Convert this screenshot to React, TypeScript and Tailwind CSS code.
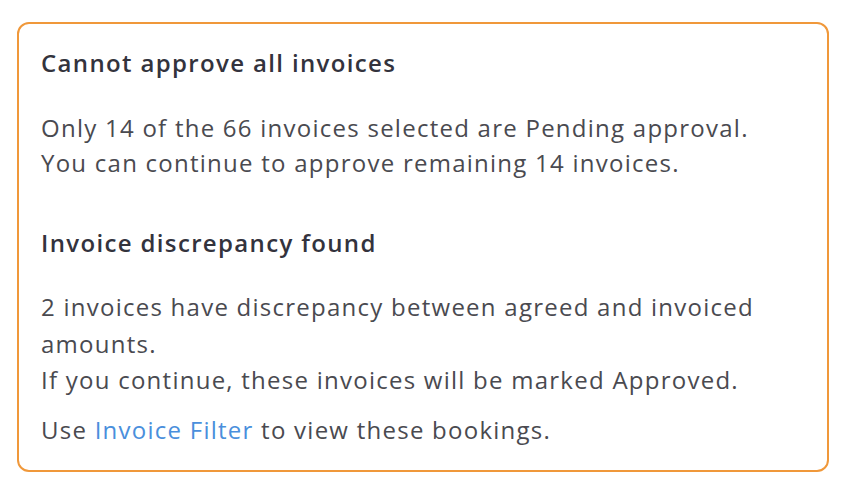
export default function App() {
  return (
    <div className="w-[846px] h-[486px] bg-white pt-[22px] pl-[17px] font-['Open_Sans',sans-serif]">
      <div className="w-[812px] h-[450px] rounded-[12px] border-2 border-[#f0983a] pl-[22px] pr-[22px] pt-[23px]">
        <h3 className="text-[24px] leading-[32px] tracking-[1.35px] font-semibold text-[#33333d]">
          Cannot approve all invoices
        </h3>
        <div className="mt-[31px] text-[24px] leading-[35px] tracking-[1.25px] text-[#4a4a50]">
          <p>Only 14 of the 66 invoices selected are Pending approval.</p>
          <p>You can continue to approve remaining 14 invoices.</p>
        </div>
        <h3 className="mt-[47px] text-[24px] leading-[32px] tracking-[1.35px] font-semibold text-[#33333d]">
          Invoice discrepancy found
        </h3>
        <div className="mt-[30px] text-[24px] leading-[36.5px] tracking-[1.25px] text-[#4a4a50]">
          <p>2 invoices have discrepancy between agreed and invoiced amounts.</p>
          <p>If you continue, these invoices will be marked Approved.</p>
          <p className="mt-[13px]">
            Use <span className="text-[#4a8fdc]">Invoice Filter</span> to view these bookings.
          </p>
        </div>
      </div>
    </div>
  );
}
